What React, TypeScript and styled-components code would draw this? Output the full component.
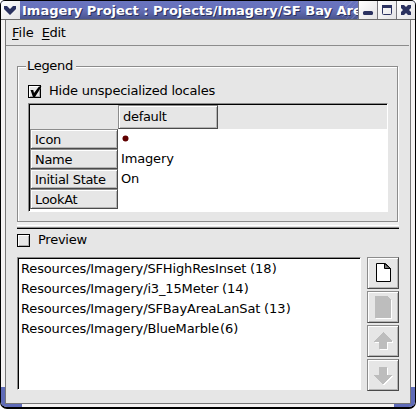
import React from "react";
import styled, { createGlobalStyle, css } from "styled-components";

const Global = createGlobalStyle`
  * { box-sizing: border-box; }
  body { margin: 0; background: #fff; overflow: hidden; }
`;

const Frame = styled.div`
  width: 416px;
  height: 409px;
  display: flex;
  flex-direction: column;
  background: #f4f2f2;
  border: 1px solid #000;
  border-bottom-width: 2px;
  border-radius: 5px 5px 7px 7px;
  overflow: hidden;
  position: relative;
  font: 13px/16px "DejaVu Sans", Verdana, sans-serif;
  color: #000;
`;
const TitleBar = styled.header`
  display: flex;
  height: 19px;
  flex: none;
  border-bottom: 1px solid #6b6b6b;
  background: linear-gradient(#6974c0, #6771ba 45%, #4a558f);
`;
const TitleText = styled.div`
  flex: 1;
  min-width: 0;
  overflow: hidden;
  white-space: nowrap;
  padding-left: 2px;
  color: #fff;
  font-weight: bold;
  font-size: 13px;
  line-height: 19px;
  text-shadow: 1px 1px 0 #29305c;
  background: repeating-linear-gradient(135deg, transparent 0 3px, #8790cc66 3px 4px) right / 16px 100% no-repeat;
`;
const TitleButton = styled.button<{ $edge?: boolean }>`
  width: 19px;
  height: 18px;
  flex: none;
  padding: 0;
  border: 0;
  border-left: ${(p) => (p.$edge ? "1px solid #77767c" : "0")};
  background: linear-gradient(135deg, #fff, #e4e3e5);
  display: flex;
  svg { display: block; }
`;
const Body = styled.main`
  flex: 1;
  margin: 0 4px 3px 4px;
  border: 1px solid #777;
  border-top: 0;
  background: #e6e6e6;
  display: flex;
  flex-direction: column;
  position: relative;
`;
const Corner = styled.i<{ $right?: boolean }>`
  position: absolute;
  bottom: 0;
  width: 21px;
  height: 20px;
  ${(p) => (p.$right ? "right: 0;" : "left: 0;")}
  border: 0 solid #5f6bb8;
  border-bottom-width: 3px;
  ${(p) => (p.$right ? "border-right-width: 4px;" : "border-left-width: 4px;")}
`;
const MenuBar = styled.nav`
  height: 26px;
  flex: none;
  display: flex;
  gap: 8px;
  padding: 5px 0 0 6px;
  margin-right: 1px;
  border-bottom: 1px solid #8c8c8c;
  u { text-underline-offset: 2px; text-decoration-thickness: 1px; }
`;
const Text = styled.span<{ $w?: number; $ls?: number }>`
  display: inline-block;
  white-space: pre;
  letter-spacing: ${(p) => p.$ls ?? 0}px;
  ${(p) => p.$w && css`width: ${p.$w}px;`}
`;
const Content = styled.div`
  padding: 20px 10px 0 11px;
  display: flex;
  flex-direction: column;
`;
const Group = styled.section`
  height: 156px;
  width: 381px;
  border: 1px solid #8c8c8c;
  box-shadow: 1px 1px 0 #fff, inset 1px 1px 0 #fff;
  padding: 0 10px;
`;
const Legend = styled.div`
  width: 50px;
  height: 16px;
  margin: -9px 0 0 -2px;
  padding-left: 1px;
  background: #e6e6e6;
  line-height: 16px;
  letter-spacing: -0.3px;
`;
const CheckRow = styled.label<{ $top: number }>`
  display: flex;
  align-items: center;
  gap: 8px;
  height: 16px;
  margin-top: ${(p) => p.$top}px;
`;
const Box = styled.span`
  width: 13px;
  height: 13px;
  border: 1px solid #000;
  box-shadow: inset 1px 1px 0 #fff, inset -1px -1px 0 #aaa;
  flex: none;
  svg { display: block; margin: -1px; overflow: visible; }
`;
const sunken = css`
  background: #fff;
  border: 1px solid #fff;
  border-top-color: #8c8c8c;
  border-left-color: #8c8c8c;
  box-shadow: inset 1px 1px 0 #000;
  padding: 1px 0 0 1px;
`;
const Table = styled.div`
  ${sunken}
  width: 360px;
  height: 109px;
  margin-top: 4px;
`;
const HeadRow = styled.div`
  display: flex;
  height: 24px;
  padding-left: 88px;
  background: #e6e6e6;
`;
const HeaderCell = styled.div<{ $w: number; $h: number }>`
  width: ${(p) => p.$w}px;
  height: ${(p) => p.$h}px;
  flex: none;
  padding-left: 4px;
  line-height: ${(p) => (p.$h > 20 ? 21 : 19)}px;
  letter-spacing: -0.3px;
  white-space: nowrap;
  background: #e6e6e6;
  border: 1px solid #8c8c8c;
  border-right-color: #4a4a4a;
  border-bottom-color: #4a4a4a;
  box-shadow: inset 1px 1px 0 #fff, inset -1px -1px 0 #b4b4b4;
`;
const Row = styled.div`
  display: flex;
  height: 20px;
`;
const Value = styled.div`
  padding-left: 3px;
  line-height: 19px;
  letter-spacing: -0.15px;
  svg { display: block; margin: 6px 0 0 1px; }
`;
const Divider = styled.div`
  height: 7px;
  width: 382px;
  border-bottom: 1px solid #000;
  box-shadow: inset 0 -1px 0 #8c8c8c, inset 0 3px 0 #efefef, inset 0 4px 0 #fff;
`;
const Lower = styled.div`
  display: flex;
  gap: 6px;
  margin-top: 9px;
`;
const List = styled.div`
  ${sunken}
  width: 344px;
  height: 133px;
  padding: 1px 0 0 3px;
`;
const Item = styled.div`
  display: flex;
  height: 20px;
  line-height: 20px;
`;
const Tools = styled.div`
  display: flex;
  flex-direction: column;
  gap: 2px;
`;
const ToolButton = styled.button`
  width: 32px;
  height: 32px;
  padding: 0;
  background: #e6e6e6;
  border: 1px solid #8c8c8c;
  border-right-color: #4a4a4a;
  border-bottom-color: #4a4a4a;
  box-shadow: inset 1px 1px 0 #fff, inset -1px -1px 0 #b4b4b4;
  svg { display: block; margin: -1px; }
`;

const rows = [
  { label: "Icon" },
  { label: "Name", value: "Imagery" },
  { label: "Initial State", value: "On" },
  { label: "LookAt" },
];
const resources = [
  { path: "Resources/Imagery/SFHighResInset", count: 18, w: 229 },
  { path: "Resources/Imagery/i3_15Meter", count: 14, w: 201 },
  { path: "Resources/Imagery/SFBayAreaLanSat", count: 13, w: 243 },
  { path: "Resources/Imagery/BlueMarble", count: 6, w: 199 },
];

const Arrow = ({ down }: { down?: boolean }) => {
  const d = down ? "M12 8h8v8h5v1l-9 8-9-8v-1h5z" : "M16 7l9 9v1h-5v7h-8v-7H7v-1z";
  return (
    <svg width="32" height="32" shapeRendering="crispEdges">
      <path d={d} fill="#fff" transform="translate(1 1)" />
      <path d={d} fill="#bdbdbd" />
    </svg>
  );
};

export default function App() {
  return (
    <>
      <Global />
      <Frame>
        <TitleBar>
          <TitleButton aria-label="Window menu">
            <svg width="18" height="18"><path d="M3 5h3l3 3 3-3h3v3l-6 6-6-6z" fill="#2b3260" /></svg>
          </TitleButton>
          <TitleText>Imagery Project : Projects/Imagery/SF Bay Area</TitleText>
          <TitleButton $edge aria-label="Minimize">
            <svg width="18" height="18"><rect x="4" y="10" width="10" height="4" rx="1.5" fill="#2b3260" /></svg>
          </TitleButton>
          <TitleButton $edge aria-label="Maximize">
            <svg width="18" height="18">
              <rect x="4.5" y="4.5" width="9" height="9" rx="1" fill="none" stroke="#2b3260" />
              <path d="M4 4h10v3H4z" fill="#2b3260" />
            </svg>
          </TitleButton>
          <TitleButton $edge aria-label="Close">
            <svg width="18" height="18"><path d="M4 4h3l2 2 2-2h3v3l-2 2 2 2v3h-3l-2-2-2 2H4v-3l2-2-2-2z" fill="#2b3260" /></svg>
          </TitleButton>
        </TitleBar>
        <Corner />
        <Corner $right />
        <Body>
          <MenuBar>
            <Text><u>F</u>ile</Text>
            <Text $ls={-0.4}><u>E</u>dit</Text>
          </MenuBar>
          <Content>
            <Group>
              <Legend>Legend</Legend>
              <CheckRow $top={9}>
                <Box>
                  <svg width="13" height="13">
                    <path d="M5 5v4l1 2L12 3" fill="none" stroke="#999" strokeWidth="1.5" />
                    <path d="M2.5 5h2.5l1 3L11 1.5h2.5L7 12H5z" fill="#000" />
                  </svg>
                </Box>
                <Text $ls={-0.21}>Hide unspecialized locales</Text>
              </CheckRow>
              <Table>
                <HeadRow><HeaderCell $w={100} $h={24}>default</HeaderCell></HeadRow>
                {rows.map((r) => (
                  <Row key={r.label}>
                    <HeaderCell $w={88} $h={20}>{r.label}</HeaderCell>
                    <Value>
                      {r.label === "Icon" ? (
                        <svg width="7" height="7"><circle cx="3.5" cy="3.5" r="3" fill="#600000" /></svg>
                      ) : r.value}
                    </Value>
                  </Row>
                ))}
              </Table>
            </Group>
            <Divider />
            <CheckRow $top={3}>
              <Box />
              <Text $ls={-0.25}>Preview</Text>
            </CheckRow>
            <Lower>
              <List>
                {resources.map((r) => (
                  <Item key={r.path}>
                    <Text $w={r.w} $ls={-0.14}>{r.path}</Text>
                    <Text>({r.count})</Text>
                  </Item>
                ))}
              </List>
              <Tools>
                <ToolButton aria-label="New">
                  <svg width="32" height="32">
                    <path d="M9.5 6.5h9l5 5v13h-14z" fill="#fff" stroke="#000" />
                    <path d="M17.5 6.5v5h6z" fill="#777" stroke="#000" />
                  </svg>
                </ToolButton>
                <ToolButton aria-label="Properties" disabled>
                  <svg width="32" height="32" shapeRendering="crispEdges">
                    <path d="M9 6h12l4 4v18H9z" fill="#fff" />
                    <path d="M8 5h12l4 4v18H8z" fill="#bdbdbd" />
                  </svg>
                </ToolButton>
                <ToolButton aria-label="Move up" disabled><Arrow /></ToolButton>
                <ToolButton aria-label="Move down" disabled><Arrow down /></ToolButton>
              </Tools>
            </Lower>
          </Content>
        </Body>
      </Frame>
    </>
  );
}
